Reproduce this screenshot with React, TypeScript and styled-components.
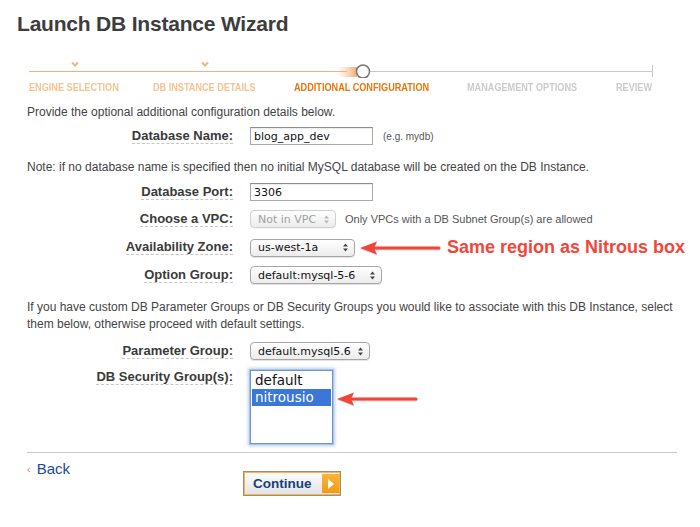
import React from "react";
import styled, { createGlobalStyle } from "styled-components";

const Global = createGlobalStyle`
  html, body { margin: 0; padding: 0; background: #fff; }
  body { font-family: "Liberation Sans", Arial, sans-serif; color: #444; }
`;

const Page = styled.div`
  width: 700px;
  height: 527px;
  box-sizing: border-box;
  padding: 11px 23px 0 27px;
  overflow: hidden;
`;

const Title = styled.h1`
  margin: 0 0 0 -10px;
  font-size: 21px;
  line-height: 26px;
  font-weight: bold;
  color: #3d3d3d;
  letter-spacing: -0.2px;
`;

const Tracker = styled.div`
  margin: 21px 0 0 2px;
`;

const TrackSvg = styled.svg`
  display: block;
`;

const StepLabels = styled.div`
  display: grid;
  grid-template-columns: 124px 141px 173px 149px auto;
  margin-top: 3px;
`;

type StepState = "done" | "active" | "todo";
const stepColor: Record<StepState, string> = {
  done: "#f5c393",
  active: "#e8770f",
  todo: "#cbcbcb",
};

const StepLabel = styled.span<{ $state: StepState }>`
  display: inline-block;
  font-family: "Liberation Sans", Arial, sans-serif;
  font-weight: bold;
  font-size: 11px;
  line-height: 12px;
  white-space: nowrap;
  transform: scaleX(0.83);
  transform-origin: left center;
  color: ${(p) => stepColor[p.$state]};
`;

const Text = styled.p<{ $top: number; $lh?: number }>`
  margin: ${(p) => p.$top}px 0 0;
  font-size: 12px;
  line-height: ${(p) => p.$lh ?? 16}px;
  color: #444;
`;

const Row = styled.div<{ $top: number; $align?: string }>`
  display: grid;
  grid-template-columns: 206px auto;
  column-gap: 17px;
  align-items: ${(p) => p.$align ?? "center"};
  margin-top: ${(p) => p.$top}px;
`;

const LabelCell = styled.div`
  justify-self: end;
  display: flex;
`;

const Label = styled.label`
  display: inline-block;
  font-size: 13px;
  font-weight: bold;
  line-height: 14px;
  color: #3a3a3a;
  border-bottom: 1px dashed #c6c6c6;
  white-space: nowrap;
`;

const Controls = styled.div`
  display: flex;
  align-items: center;
`;

const TextInput = styled.input`
  box-sizing: border-box;
  width: 123px;
  height: 18px;
  margin: 0;
  padding: 0 3px;
  border: 1px solid #a9a9a9;
  border-top-color: #8e8e8e;
  box-shadow: inset 0 1px 1px rgba(0, 0, 0, 0.08);
  font-family: "DejaVu Sans", sans-serif;
  font-size: 11px;
  color: #111;
  outline: none;
`;

const Hint = styled.span<{ $size?: number }>`
  margin-left: ${(p) => (p.$size ? 9 : 10)}px;
  font-size: ${(p) => p.$size ?? 10}px;
  color: #555;
  white-space: nowrap;
`;

const Select = styled.div<{ $width: number; $disabled?: boolean }>`
  box-sizing: border-box;
  width: ${(p) => p.$width}px;
  height: 18px;
  display: flex;
  align-items: center;
  justify-content: space-between;
  padding: 0 6px 0 7px;
  border: 1px solid ${(p) => (p.$disabled ? "#cfcfcf" : "#a6a6a6")};
  border-radius: 4px;
  background: linear-gradient(#ffffff, #ececec);
  box-shadow: 0 1px 1px rgba(0, 0, 0, ${(p) => (p.$disabled ? 0.04 : 0.12)});
  font-family: "DejaVu Sans", sans-serif;
  font-size: 11px;
  color: ${(p) => (p.$disabled ? "#a0a0a0" : "#111")};
  white-space: nowrap;
`;

const Caret = ({ faded }: { faded?: boolean }) => (
  <svg width="5" height="9" viewBox="0 0 5 9">
    <path d="M0 3.5 L2.5 0.5 L5 3.5 Z M0 5.5 L2.5 8.5 L5 5.5 Z" fill={faded ? "#b5b5b5" : "#444"} />
  </svg>
);

const Arrow = ({ className }: { className?: string }) => (
  <svg className={className} width="82" height="18" viewBox="0 0 82 18">
    <defs>
      <filter id="ash" x="-10%" y="-50%" width="120%" height="200%">
        <feDropShadow dx="0" dy="0.6" stdDeviation="0.6" floodColor="#000" floodOpacity="0.25" />
      </filter>
    </defs>
    <g filter="url(#ash)">
      <path d="M14 9 H80" stroke="#f1443a" strokeWidth="3" strokeLinecap="round" />
      <path d="M1 9 L18 2.5 L15 9 L18 15.5 Z" fill="#f1443a" />
    </g>
  </svg>
);

const AzArrow = styled(Arrow)`
  margin-left: 4px;
  flex: none;
`;

const ListArrow = styled(Arrow)`
  margin: 20px 0 0 3px;
  flex: none;
  align-self: flex-start;
`;

const Annotation = styled.span`
  margin-left: 6px;
  font-size: 18px;
  font-weight: bold;
  color: #f3463b;
  white-space: nowrap;
`;

const ListBox = styled.div`
  box-sizing: border-box;
  width: 83px;
  height: 74px;
  padding: 1px;
  border: 1px solid #6f95cc;
  box-shadow: 0 0 0 1px #a9c4ea, 0 0 3px 2px rgba(120, 160, 220, 0.5);
  background: #fff;
`;

const Option = styled.div<{ $selected?: boolean }>`
  padding-left: 3px;
  font-family: "DejaVu Sans", sans-serif;
  font-size: 13.5px;
  line-height: 17px;
  color: ${(p) => (p.$selected ? "#fff" : "#111")};
  background: ${(p) => (p.$selected ? "#3a77d7" : "transparent")};
`;

const Divider = styled.div`
  height: 1px;
  width: 650px;
  margin-top: 8px;
  background: #c9c9c9;
`;

const Footer = styled.div`
  display: grid;
  grid-template-columns: 216px auto;
  margin-top: 7px;
  align-items: start;
`;

const Back = styled.a`
  display: flex;
  align-items: center;
  font-size: 15px;
  line-height: 18px;
  color: #1a4c8b;
  text-decoration: none;
`;

const BackMark = styled.span`
  font-size: 11px;
  color: #e9775a;
  margin-right: 6px;
`;

const ContinueButton = styled.button`
  box-sizing: border-box;
  margin-top: 11px;
  width: 98px;
  height: 25px;
  padding: 0 1px 0 9px;
  display: flex;
  align-items: center;
  justify-content: space-between;
  border: 1px solid #9a8f7c;
  box-shadow: inset 0 0 0 1px #f6b64a;
  background: linear-gradient(#fefefe, #e2e2e2);
  font-family: "Liberation Sans", Arial, sans-serif;
  font-size: 13.5px;
  font-weight: bold;
  color: #173f7c;
  cursor: pointer;
`;

const PlayBox = styled.span`
  width: 17px;
  height: 19px;
  display: flex;
  align-items: center;
  justify-content: center;
  background: linear-gradient(#fbb43a, #f39a12);
`;

const steps: { label: string; state: StepState }[] = [
  { label: "ENGINE SELECTION", state: "done" },
  { label: "DB INSTANCE DETAILS", state: "done" },
  { label: "ADDITIONAL CONFIGURATION", state: "active" },
  { label: "MANAGEMENT OPTIONS", state: "todo" },
  { label: "REVIEW", state: "todo" },
];

const ProgressGraphic = () => (
  <TrackSvg width="625" height="20" viewBox="0 0 625 20">
    <defs>
      <linearGradient id="glow" x1="0" x2="1" y1="0" y2="0">
        <stop offset="0" stopColor="#f7c59a" stopOpacity="0" />
        <stop offset="1" stopColor="#f4a764" stopOpacity="0.95" />
      </linearGradient>
    </defs>
    <line x1="0" y1="13.5" x2="318" y2="13.5" stroke="#efb27e" strokeWidth="1" />
    <rect x="308" y="9" width="20" height="10" fill="url(#glow)" />
    <line x1="312" y1="11" x2="328" y2="11" stroke="url(#glow)" strokeWidth="1" />
    <line x1="312" y1="16" x2="328" y2="16" stroke="url(#glow)" strokeWidth="1" />
    <line x1="341" y1="13.5" x2="623" y2="13.5" stroke="#c9c9c9" strokeWidth="1" />
    <line x1="623.5" y1="7" x2="623.5" y2="19" stroke="#c9c9c9" strokeWidth="1" />
    <circle cx="334" cy="13.5" r="6.5" fill="#fff" stroke="#777" strokeWidth="1.5" />
    <path d="M43 4.5 L46 7.5 L49 4.5" stroke="#f1b47c" strokeWidth="2" fill="none" />
    <path d="M173 4.5 L176 7.5 L179 4.5" stroke="#f1b47c" strokeWidth="2" fill="none" />
  </TrackSvg>
);

export default function App() {
  return (
    <>
      <Global />
      <Page>
        <Title>Launch DB Instance Wizard</Title>
        <Tracker>
          <ProgressGraphic />
          <StepLabels>
            {steps.map((s) => (
              <StepLabel key={s.label} $state={s.state}>
                {s.label}
              </StepLabel>
            ))}
          </StepLabels>
        </Tracker>

        <Text $top={11}>Provide the optional additional configuration details below.</Text>

        <Row $top={7}>
          <LabelCell>
            <Label>Database Name:</Label>
          </LabelCell>
          <Controls>
            <TextInput readOnly value="blog_app_dev" />
            <Hint>(e.g. mydb)</Hint>
          </Controls>
        </Row>

        <Text $top={14}>
          Note: if no database name is specified then no initial MySQL database will be created on the DB Instance.
        </Text>

        <Row $top={8}>
          <LabelCell>
            <Label>Database Port:</Label>
          </LabelCell>
          <Controls>
            <TextInput readOnly value="3306" />
          </Controls>
        </Row>

        <Row $top={9}>
          <LabelCell>
            <Label>Choose a VPC:</Label>
          </LabelCell>
          <Controls>
            <Select $width={86} $disabled>
              Not in VPC <Caret faded />
            </Select>
            <Hint $size={11}>Only VPCs with a DB Subnet Group(s) are allowed</Hint>
          </Controls>
        </Row>

        <Row $top={9}>
          <LabelCell>
            <Label>Availability Zone:</Label>
          </LabelCell>
          <Controls>
            <Select $width={105}>
              us-west-1a <Caret />
            </Select>
            <AzArrow />
            <Annotation>Same region as Nitrous box</Annotation>
          </Controls>
        </Row>

        <Row $top={8}>
          <LabelCell>
            <Label>Option Group:</Label>
          </LabelCell>
          <Controls>
            <Select $width={132}>
              default:mysql-5-6 <Caret />
            </Select>
          </Controls>
        </Row>

        <Text $top={15} $lh={17}>
          If you have custom DB Parameter Groups or DB Security Groups you would like to associate with this DB Instance, select them below, otherwise proceed with default settings.
        </Text>

        <Row $top={9}>
          <LabelCell>
            <Label>Parameter Group:</Label>
          </LabelCell>
          <Controls>
            <Select $width={120}>
              default.mysql5.6 <Caret />
            </Select>
          </Controls>
        </Row>

        <Row $top={10} $align="start">
          <LabelCell>
            <Label>DB Security Group(s):</Label>
          </LabelCell>
          <Controls>
            <ListBox>
              <Option>default</Option>
              <Option $selected>nitrousio</Option>
            </ListBox>
            <ListArrow />
          </Controls>
        </Row>

        <Divider />

        <Footer>
          <Back href="#">
            <BackMark>‹</BackMark>Back
          </Back>
          <ContinueButton>
            Continue
            <PlayBox>
              <svg width="8" height="12" viewBox="0 0 8 12">
                <path d="M1 1 L7 6 L1 11 Z" fill="#fff" />
              </svg>
            </PlayBox>
          </ContinueButton>
        </Footer>
      </Page>
    </>
  );
}
